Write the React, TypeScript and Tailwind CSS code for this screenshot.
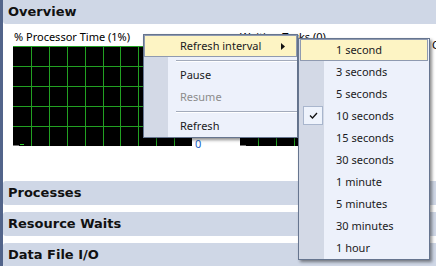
import React from "react";

const intervals = [
  "1 second",
  "3 seconds",
  "5 seconds",
  "10 seconds",
  "15 seconds",
  "30 seconds",
  "1 minute",
  "5 minutes",
  "30 minutes",
  "1 hour",
];

const GREEN = "#22a022";

function Chart({ width, trace }: { width: number; trace?: boolean }) {
  const cols = 10;
  const cw = width / cols;
  return (
    <svg width={width} height={100} className="block bg-black">
      <line x1={0} y1={0.5} x2={width} y2={0.5} stroke={GREEN} />
      {[1, 2, 3, 4].map((r) => (
        <line key={"h" + r} x1={0} y1={r * 20 + 0.5} x2={width} y2={r * 20 + 0.5} stroke={GREEN} />
      ))}
      {Array.from({ length: cols - 1 }, (_, i) => {
        const x = Math.round((i + 1) * cw) + 0.5;
        return <line key={"v" + i} x1={x} y1={0} x2={x} y2={100} stroke={GREEN} />;
      })}
      {trace && <line x1={7} y1={98.5} x2={11} y2={98.5} stroke="#2fd02f" />}
      <line x1={0} y1={99.5} x2={6} y2={99.5} stroke="#777" />
    </svg>
  );
}

function Section({ title, first }: { title: string; first?: boolean }) {
  return (
    <div
      className={
        "h-6 shrink-0 flex items-center pl-[5px] bg-[#cfd7e6] text-[13px] font-bold text-[#111] " +
        (first ? "rounded-bl-[3px]" : "rounded-l-[3px]")
      }
      style={{ fontFamily: '"DejaVu Sans", sans-serif' }}
    >
      {title}
    </div>
  );
}

function Separator() {
  return (
    <div className="h-[7px] flex flex-col justify-center pl-[32px]">
      <div className="h-px bg-[#a3abbb]" />
      <div className="h-px bg-white" />
    </div>
  );
}

function Item({
  label,
  active,
  disabled,
  arrow,
  checked,
}: {
  label: string;
  active?: boolean;
  disabled?: boolean;
  arrow?: boolean;
  checked?: boolean;
}) {
  return (
    <div
      className={
        "relative h-[22px] flex items-center pl-[35px] pr-2 border " +
        (active ? "bg-[#fdf4c4] border-[#8f9ab0]" : "border-transparent") +
        (disabled ? " text-[#8c8c8c]" : " text-[#1a1a22]")
      }
    >
      {checked && (
        <div className="absolute left-[2px] top-[-1px] w-[20px] h-[19px] mt-[1px] border border-[#a9b6cd] bg-[#eef3fc] flex items-center justify-center">
          <svg width="9" height="7" viewBox="0 0 9 7">
            <path d="M1 3.5 L3.5 6 L8 1" stroke="#111" strokeWidth="1.3" fill="none" />
          </svg>
        </div>
      )}
      <span className="flex-1">{label}</span>
      {arrow && (
        <svg width="4" height="7" viewBox="0 0 4 7" className="mr-[3px]">
          <path d="M0 0 L4 3.5 L0 7 Z" fill="#111" />
        </svg>
      )}
    </div>
  );
}

export default function App() {
  return (
    <div
      className="relative w-[436px] h-[266px] overflow-hidden bg-white flex text-[11px]"
      style={{ fontFamily: '"Noto Sans", sans-serif' }}
    >
      <div className="w-[3px] shrink-0 bg-[#52648a]" />
      <div className="flex-1 flex flex-col">
        <Section title="Overview" first />
        <div className="h-[157px] shrink-0 pt-[5px] pl-[10px] flex">
          <div className="flex flex-col">
            <div className="h-[15px] leading-[15px] pl-px mb-[2px] text-black">% Processor Time (1%)</div>
            <div className="flex">
              <Chart width={179} trace />
              <div className="w-[48px] flex flex-col justify-end pl-[3px]">
                <span className="leading-none mb-[-3px] text-[#1a62c8]">0</span>
              </div>
            </div>
          </div>
          <div className="flex flex-col">
            <div className="h-[15px] leading-[15px] mb-[2px] text-black">Waiting Tasks (0)</div>
            <Chart width={179} />
          </div>
          <div className="pl-[13px] pt-[8px] text-black">C</div>
        </div>
        <Section title="Processes" />
        <div className="h-[7px] shrink-0" />
        <Section title="Resource Waits" />
        <div className="h-[7px] shrink-0" />
        <Section title="Data File I/O" />
      </div>

      {/* context menu */}
      <div className="absolute left-[143px] top-[34px] w-[155px] border border-[#66758f] bg-[#edf1fb] shadow-[2px_2px_3px_rgba(0,0,0,0.45)]">
        <div className="absolute left-0 top-0 bottom-0 w-[24px] bg-[#d3d9e6]" />
        <div className="relative">
          <Item label="Refresh interval" active arrow />
          <Separator />
          <Item label="Pause" />
          <Item label="Resume" disabled />
          <Separator />
          <Item label="Refresh" />
        </div>
      </div>

      {/* submenu */}
      <div className="absolute left-[298px] top-[38px] w-[132px] border border-[#66758f] bg-[#edf1fb] shadow-[2px_2px_3px_rgba(0,0,0,0.45)]">
        <div className="absolute left-0 top-0 bottom-0 w-[25px] bg-[#d3d9e6]" />
        <div className="relative px-px">
          {intervals.map((t, i) => (
            <Item key={t} label={t} active={i === 0} checked={t === "10 seconds"} />
          ))}
        </div>
      </div>
    </div>
  );
}
